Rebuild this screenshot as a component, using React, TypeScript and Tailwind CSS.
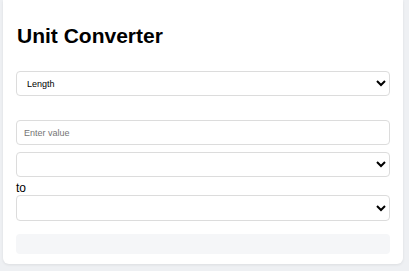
const font = { fontFamily: '"Liberation Sans", Arial, sans-serif' };

export default function App() {
  return (
    <div className="min-h-[271px] bg-[#eef0f3] pl-[3px]" style={font}>
      <div className="w-[400px] rounded-b-[6px] bg-white px-[13px] pt-[24px] pb-[10px] shadow-[0_1px_3px_rgba(0,0,0,0.08)]">
        <h1 className="pl-px text-[21px] leading-[24px] font-bold text-black">Unit Converter</h1>

        <select className="mt-[23px] block h-[25px] w-full rounded-[4px] border border-[#dcdcdc] bg-white px-[6px] text-[9px] text-black">
          <option>Length</option>
        </select>

        <input
          type="text"
          placeholder="Enter value"
          className="mt-[24px] block h-[25px] w-full rounded-[4px] border border-[#dcdcdc] bg-white px-[7px] text-[9px] placeholder:text-[#757575]"
        />

        <select className="mt-[7px] block h-[25px] w-full rounded-[4px] border border-[#dcdcdc] bg-white px-[6px] text-[9px]">
          <option></option>
        </select>

        <div className="mt-[4px] text-[12px] leading-[14px] text-black">to</div>

        <select className="block h-[26px] w-full rounded-[4px] border border-[#dcdcdc] bg-white px-[6px] text-[9px]">
          <option></option>
        </select>

        <div className="mt-[13px] h-[20px] rounded-[4px] bg-[#f5f6f8]" />
      </div>
    </div>
  );
}
